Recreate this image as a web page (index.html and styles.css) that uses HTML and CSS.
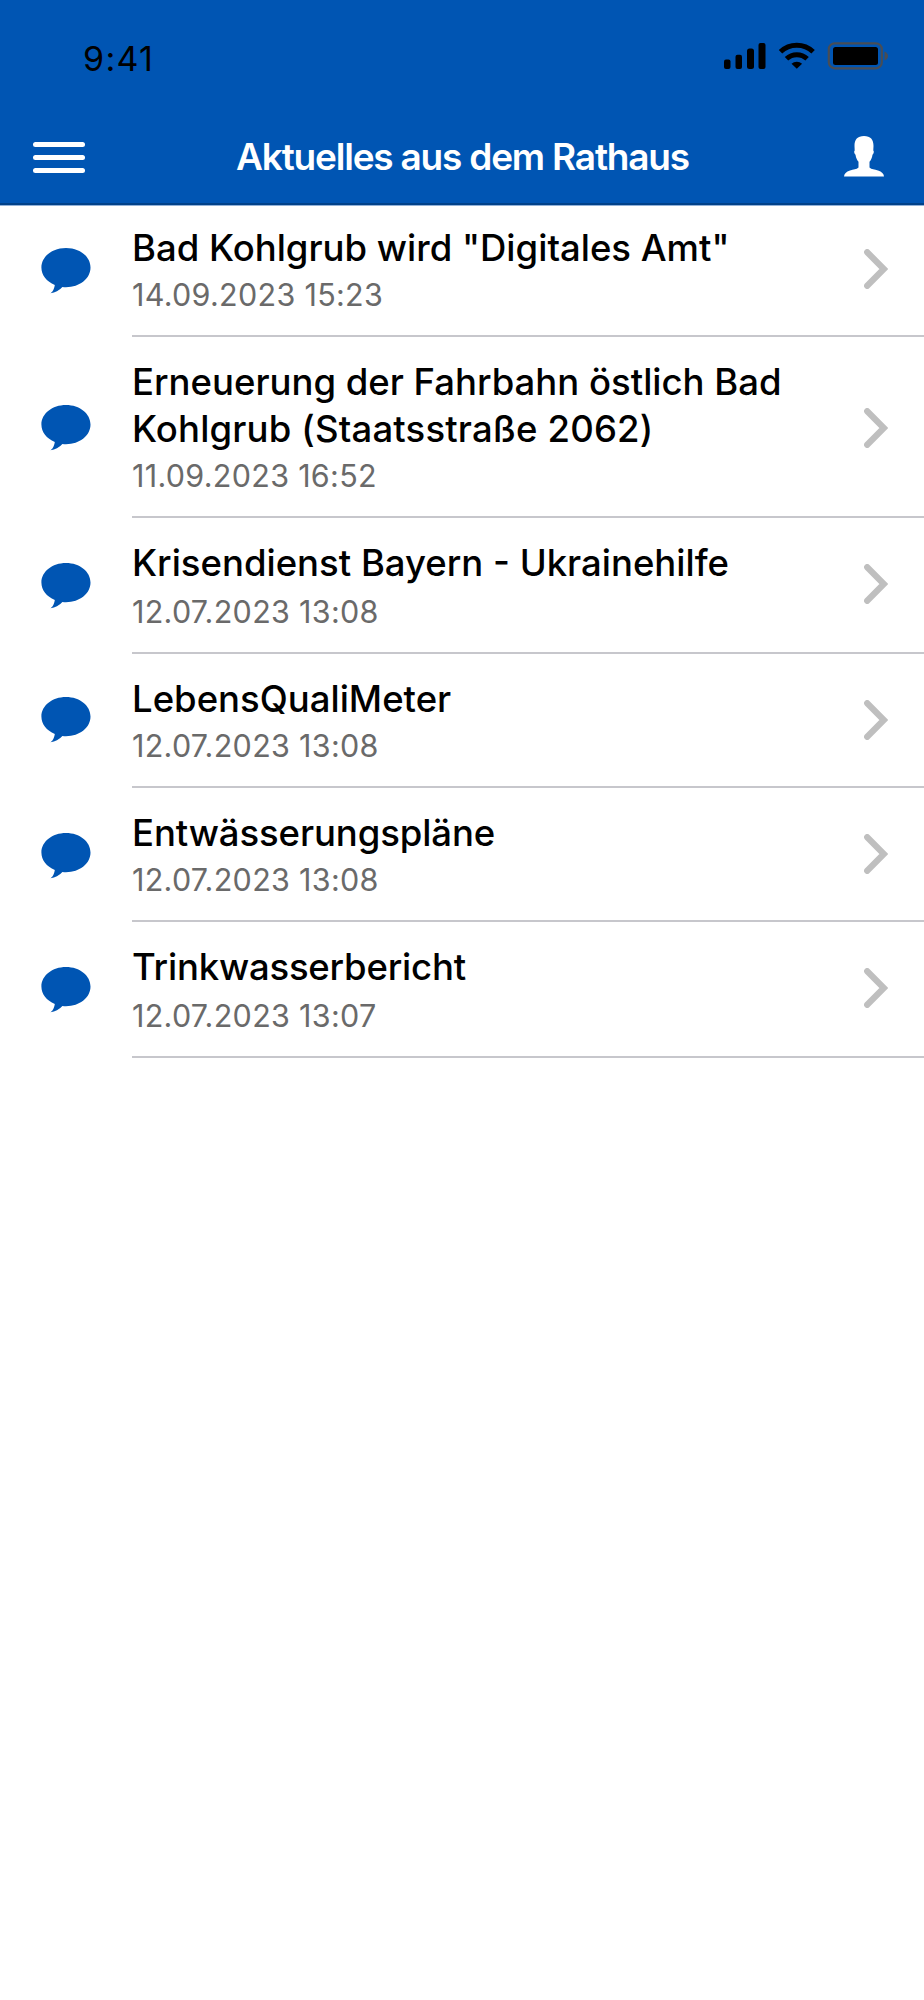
FILE: index.html
```html
<!DOCTYPE html>
<html lang="de">
<head>
<meta charset="utf-8">
<title>Aktuelles aus dem Rathaus</title>
<link rel="stylesheet" href="styles.css">
</head>
<body>
<svg width="0" height="0" class="defs">
  <symbol id="bubble" viewBox="0 0 50 46"><path d="M25 0C38.800 0 49.500 8.600 49.500 19.500S38.800 39.200 25 39.200q-1.800 0-3.600-.2Q16.500 44.500 9.500 45.300q3.800-3.300 4.300-8.400C5.500 33.500 .4 27 .4 19.500.4 8.600 11.200 0 25 0z" fill="#0055b3"/></symbol>
  <symbol id="chevron" viewBox="0 0 24 40"><path d="M3.200 3.200l16.600 16.800L3.200 36.800" fill="none" stroke="#bfbfbf" stroke-width="6.200" stroke-linecap="round" stroke-linejoin="miter"/></symbol>
</svg>
<header class="header">
  <div class="status">
    <span class="time">9:41</span>
    <svg class="indicators" width="164" height="28" viewBox="0 0 164 28">
      <rect x="0" y="17.500" width="6.500" height="9.500" rx="2"/>
      <rect x="11.500" y="12.700" width="6.500" height="14.300" rx="2"/>
      <rect x="23" y="6.500" width="7" height="20.500" rx="2.500"/>
      <rect x="34.500" y="1" width="7" height="26" rx="2"/>
      <g fill="none" stroke="#000" stroke-width="5">
        <path d="M56.500 9.800a23.500 23.500 0 0 1 32.600 0"/>
        <path d="M62.500 16.800a15 15 0 0 1 20.600 0"/>
      </g>
      <path d="M67.500 21.800a7.800 7.800 0 0 1 10.600 0L72.800 26.800z"/>
      <rect x="104.800" y="1.300" width="53" height="25" rx="6" fill="none" stroke="#484d55" stroke-width="2.200"/>
      <rect x="109" y="5" width="45" height="18" rx="2.500"/>
      <path d="M160.500 9.500q3.500 1.500 3.500 4.500t-3.500 4.500z" fill="#484d55"/>
    </svg>
  </div>
  <div class="nav">
    <div class="menu"><span></span><span></span><span></span></div>
    <h1 class="heading">Aktuelles aus dem Rathaus</h1>
    <svg class="person" width="40" height="41" viewBox="0 0 40 41"><path d="M20 0c6.500 0 9.600 3.600 9.500 10 0 1.500-.2 3-.2 4.500 1 .8.500 3.200-.8 4.300-.5 3.300-1.500 5.300-3 7v5.700c2 2 5 1.800 8.500 3q5.700 1.900 6 6H0q.3-4.100 6-6c3.500-1.200 6.500-1 8.500-3v-5.700c-1.500-1.700-2.500-3.700-3-7-1.300-1.100-1.800-3.500-.8-4.300 0-1.500-.2-3-.2-4.500C10.400 3.600 13.500 0 20 0z" fill="#fff"/></svg>
  </div>
</header>
<main class="list">
  <article class="row first">
    <svg class="bubble"><use href="#bubble"/></svg>
    <div class="body"><div class="text"><h2>Bad Kohlgrub wird "Digitales Amt"</h2><time>14.09.2023 15:23</time></div><svg class="chevron"><use href="#chevron"/></svg></div>
  </article>
  <article class="row double">
    <svg class="bubble"><use href="#bubble"/></svg>
    <div class="body"><div class="text"><h2>Erneuerung der Fahrbahn östlich Bad<br><span class="loose">Kohlgrub (Staatsstraße 2062)</span></h2><time>11.09.2023 16:52</time></div><svg class="chevron"><use href="#chevron"/></svg></div>
  </article>
  <article class="row tall">
    <svg class="bubble"><use href="#bubble"/></svg>
    <div class="body"><div class="text"><h2>Krisendienst Bayern - Ukrainehilfe</h2><time>12.07.2023 13:08</time></div><svg class="chevron"><use href="#chevron"/></svg></div>
  </article>
  <article class="row raised">
    <svg class="bubble"><use href="#bubble"/></svg>
    <div class="body"><div class="text"><h2>LebensQualiMeter</h2><time>12.07.2023 13:08</time></div><svg class="chevron"><use href="#chevron"/></svg></div>
  </article>
  <article class="row">
    <svg class="bubble"><use href="#bubble"/></svg>
    <div class="body"><div class="text"><h2 class="snug">Entwässerungspläne</h2><time>12.07.2023 13:08</time></div><svg class="chevron"><use href="#chevron"/></svg></div>
  </article>
  <article class="row tall">
    <svg class="bubble"><use href="#bubble"/></svg>
    <div class="body"><div class="text"><h2 class="tight">Trinkwasserbericht</h2><time>12.07.2023 13:07</time></div><svg class="chevron"><use href="#chevron"/></svg></div>
  </article>
</main>
</body>
</html>
```
FILE: styles.css
```css
* { box-sizing: border-box; }
body { margin: 0; min-height: 2000px; background: #fff; color: #000; font-family: Inter, "Liberation Sans", sans-serif; }
.defs { display: block; }
h1, h2 { margin: 0; }

.header { height: 206px; background: #0055b3; border-bottom: 1px solid #91b1d8; box-shadow: inset 0 -2px 0 #004189; display: flex; flex-direction: column; }
.status { height: 115px; display: flex; justify-content: space-between; align-items: flex-start; padding: 42px 36px 0 83px; }
.time { font-size: 34px; line-height: 34px; letter-spacing: 1.3px; }
.indicators { display: block; }
.nav { height: 90px; display: flex; justify-content: space-between; align-items: flex-start; padding: 21px 40px 0 33px; }
.menu { width: 52px; padding-top: 6px; display: flex; flex-direction: column; gap: 8px; }
.menu span { height: 5px; border-radius: 3px; background: #fff; }
.heading { font-size: 37px; line-height: 42px; font-weight: 600; letter-spacing: -1.2px; margin-right: 4px; color: #fff; white-space: nowrap; }
.person { display: block; }

.row { height: 134px; display: flex; align-items: flex-end; }
.row.first { height: 131px; }
.row.double { height: 181px; }
.row.tall { height: 136px; }
.bubble { width: 50px; height: 46px; margin: 0 41px 43px; flex: none; }
.double .bubble { margin-bottom: 67px; }
.tall .bubble, .raised .bubble { margin-bottom: 45px; }
.body { flex: 1; height: 100%; display: flex; align-items: flex-end; justify-content: space-between; border-bottom: 2px solid #c7c7cc; }
.text { padding-bottom: 17px; white-space: nowrap; }
.text h2 { font-size: 36.500px; line-height: 47px; font-weight: 500; letter-spacing: 0; }
.text .loose { letter-spacing: 0.17px; }
.text .snug { letter-spacing: -0.1px; }
.text .tight { letter-spacing: -0.2px; }
.text time { display: block; font-size: 30.500px; line-height: 46px; letter-spacing: 0.3px; color: #6a6a6a; }
.tall time { padding-top: 2px; }
.chevron { width: 24px; height: 40px; margin: 0 36px 46px 0; flex: none; }
.double .chevron { margin-bottom: 68px; }
.tall .chevron { margin-bottom: 48px; }
```
